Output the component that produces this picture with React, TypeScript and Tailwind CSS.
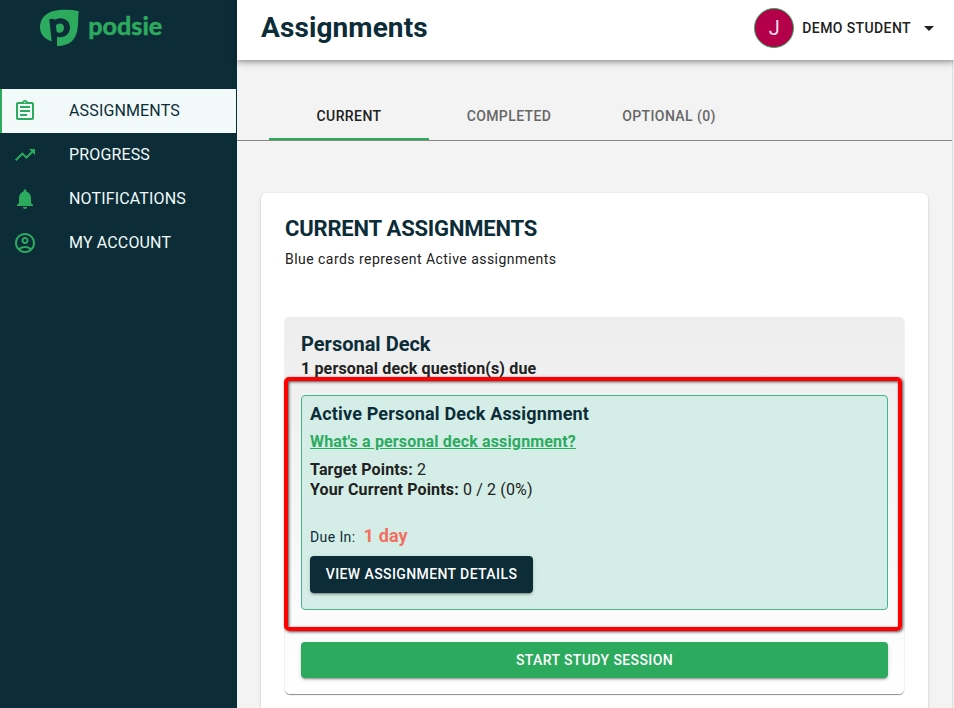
import type { ReactNode } from "react";

function Icon({ children, size = 24 }: { children: ReactNode; size?: number }) {
  return (
    <svg width={size} height={size} viewBox="0 0 24 24" fill="currentColor" className="shrink-0">
      {children}
    </svg>
  );
}

const navItems = [
  {
    label: "ASSIGNMENTS",
    active: true,
    icon: (
      <path d="M7 15h7v2H7zm0-4h10v2H7zm0-4h10v2H7zm12-4h-4.180C14.400 1.840 13.300 1 12 1c-1.300 0-2.400.84-2.820 2H5c-.14 0-.27.01-.4.04-.39.08-.74.28-1.010.55-.18.18-.33.4-.43.64-.1.23-.16.49-.16.77v14c0 .27.06.54.16.78s.25.45.43.64c.27.27.62.47 1.010.55.13.02.26.03.4.03h14c1.100 0 2-.9 2-2V5c0-1.100-.9-2-2-2m-7-.25c.41 0 .75.34.75.75s-.34.75-.75.75-.75-.34-.75-.75.34-.75.75-.75M19 19H5V5h14z" />
    ),
  },
  { label: "PROGRESS", icon: <path d="m16 6 2.290 2.290-4.880 4.880-4-4L2 16.590 3.410 18l6-6 4 4 6.300-6.290L22 12V6z" /> },
  {
    label: "NOTIFICATIONS",
    icon: (
      <path d="M12 22c1.100 0 2-.9 2-2h-4c0 1.100.89 2 2 2m6-6v-5c0-3.070-1.640-5.640-4.500-6.320V4c0-.83-.67-1.500-1.500-1.500s-1.500.67-1.500 1.500v.68C7.630 5.360 6 7.920 6 11v5l-2 2v1h16v-1z" />
    ),
  },
  {
    label: "MY ACCOUNT",
    icon: (
      <path d="M12 2C6.480 2 2 6.480 2 12s4.480 10 10 10 10-4.480 10-10S17.520 2 12 2M7.350 18.500C8.660 17.560 10.260 17 12 17s3.340.56 4.650 1.500C15.340 19.440 13.740 20 12 20s-3.340-.56-4.650-1.500m10.790-1.380C16.450 15.800 14.320 15 12 15s-4.450.8-6.140 2.120C4.700 15.730 4 13.950 4 12c0-4.420 3.580-8 8-8s8 3.580 8 8c0 1.950-.7 3.730-1.860 5.120M12 6c-1.930 0-3.500 1.570-3.500 3.500S10.070 13 12 13s3.500-1.570 3.500-3.500S13.930 6 12 6m0 5c-.83 0-1.500-.67-1.500-1.500S11.170 8 12 8s1.500.67 1.500 1.500S12.830 11 12 11" />
    ),
  },
];

function Logo() {
  return (
    <svg width="128" height="48" viewBox="39 4 128 48" className="ml-[39px] mt-1 overflow-visible">
      <path d="M78.700 11.200C70 9 60 9.300 53.500 11C45 13.300 40 19.500 40 27C40 34.500 45 39.500 51.900 41.200L57 46C65 46 71.500 43.500 75 37C79 30 77.800 20 78.700 11.200Z" fill="#2cab5f" />
      <path d="M49.200 19.300C51.500 18.400 53.500 18.600 55 19.700C61.500 15.800 70 19.500 70 27.300C70 35 63.500 38.700 57 36.700V47L51.800 42Z" fill="#0c2d38" />
      <path d="M55.900 25.600C58 22.300 64 22.500 64 27.700C64 32.800 59 33.800 56.700 31.700Z" fill="#2cab5f" />
      <text x="88.300" y="35.300" textLength="74" lengthAdjust="spacingAndGlyphs" fill="#2cab5f" stroke="#2cab5f" strokeWidth="0.5" className="font-['Lato',sans-serif] text-[25px] font-bold">
        podsie
      </text>
    </svg>
  );
}

function Sidebar() {
  return (
    <aside className="w-[237px] shrink-0 bg-[#0c2d38]">
      <div className="h-[89px]">
        <div className="flex"><Logo /></div>
      </div>
      <nav>
        {navItems.map((item) => (
          <div
            key={item.label}
            className={
              item.active
                ? "mr-px flex h-11 items-center border-l-2 border-[#2cab5f] bg-[#f1faf8] pl-[11px] text-[#0c2d38]"
                : "flex h-11 items-center pl-[13px] text-[#f1faf8]"
            }
          >
            <span className="mr-8 w-6 text-[#2cab5f]">
              <Icon>{item.icon}</Icon>
            </span>
            <span className="text-base tracking-[0.15px]">{item.label}</span>
          </div>
        ))}
      </nav>
    </aside>
  );
}

function Header() {
  return (
    <header className="relative z-10 flex h-[60px] shrink-0 items-center justify-between bg-white pl-6 pr-[13px] pb-1 shadow-[0_2px_4px_-1px_rgba(0,0,0,0.2),0_4px_5px_rgba(0,0,0,0.14),0_1px_10px_rgba(0,0,0,0.12)]">
      <h1 className="text-[28px] font-bold tracking-[0.1px] text-[#0c2d38]">Assignments</h1>
      <div className="flex items-center">
        <div className="flex size-10 items-center justify-center rounded-full border border-[#2cab5f] bg-[#b4004b] text-xl text-[#f5dfe8]">J</div>
        <span className="ml-2 text-sm font-medium tracking-[0.4px] text-[#212121]">DEMO STUDENT</span>
        <span className="ml-1.5 text-[#212121]">
          <Icon>
            <path d="m7 10 5 5 5-5z" />
          </Icon>
        </span>
      </div>
    </header>
  );
}

function Tabs() {
  return (
    <div className="flex h-[81px] items-end border-b border-[#878787] pl-8 text-center text-sm font-medium tracking-[0.4px] text-[#666]">
      <div className="h-12 w-40 border-b-2 border-[#2cab5f] leading-[48px] text-[#212121]">CURRENT</div>
      <div className="h-12 w-40 leading-[48px]">COMPLETED</div>
      <div className="h-12 w-40 leading-[48px]">OPTIONAL (0)</div>
    </div>
  );
}

const raised = "shadow-[0_3px_1px_-2px_rgba(0,0,0,0.2),0_2px_2px_rgba(0,0,0,0.14),0_1px_5px_rgba(0,0,0,0.12)]";

function ActiveAssignment() {
  return (
    <section className="mt-4 h-[215px] rounded border border-[#45b391] bg-[#d4eee7] px-2 pt-1.5">
      <h3 className="text-lg leading-6 font-bold tracking-[0.17px] text-[#0c2d38]">Active Personal Deck Assignment</h3>
      <a className="mt-1 block text-base leading-6 font-bold tracking-[0.15px] text-[#2cab5f] underline">What's a personal deck assignment?</a>
      <p className="mt-1.5 text-base leading-5 tracking-[0.15px]"><b>Target Points:</b> 2</p>
      <p className="text-base leading-5 tracking-[0.15px]"><b>Your Current Points:</b> 0 / 2 (0%)</p>
      <p className="mt-6 flex h-6 items-baseline gap-2 text-[#0c2d38]">
        <span className="text-sm tracking-[0.4px]">Due In:</span>
        <span className="text-lg leading-6 font-bold tracking-[0.15px] text-[#f27062]">1 day</span>
      </p>
      <button className={`mt-2 block h-[37px] w-[223px] rounded bg-[#0c2d38] pb-px text-sm font-medium tracking-[0.4px] text-white ${raised}`}>
        VIEW ASSIGNMENT DETAILS
      </button>
    </section>
  );
}

export default function App() {
  return (
    <div className="flex h-[708px] w-[954px] overflow-hidden bg-[#f3f3f3] font-['Roboto',sans-serif] text-[#212121]">
      <Sidebar />
      <div className="flex min-w-0 flex-1 flex-col">
        <Header />
        <main className="mr-px flex-1 border-r border-[#dedede]">
          <Tabs />
          <div className="ml-6 mr-6 mt-[52px] h-[560px] rounded-md bg-white px-6 pt-5 shadow-[0_1px_3px_rgba(0,0,0,0.2)]">
            <h2 className="text-[22px] leading-8 font-bold tracking-[-0.2px] text-[#0c2d38]">CURRENT ASSIGNMENTS</h2>
            <p className="mt-1 text-sm leading-5 tracking-[0.46px]">Blue cards represent Active assignments</p>
            <div className="relative mt-12 h-[377px] rounded-[5px] bg-linear-to-b from-[#ededed] to-white px-4 pt-[14px] shadow-[0_1px_1px_rgba(0,0,0,0.45),0_0_1px_rgba(0,0,0,0.15)]">
              <h3 className="text-xl leading-[26px] font-bold text-[#0c2d38]">Personal Deck</h3>
              <p className="mt-[1px] text-base leading-[21px] font-bold tracking-[0.15px]">1 personal deck question(s) due</p>
              <ActiveAssignment />
              <button className={`mt-8 block h-9 w-full rounded bg-[#2cab5f] text-sm font-medium tracking-[0.4px] text-white ${raised}`}>
                START STUDY SESSION
              </button>
              <div className="pointer-events-none absolute left-[-1px] top-[60px] h-[254px] w-[618px] rounded-[5px] border-4 border-[#ff0000] shadow-[1px_1px_3px_rgba(0,0,0,0.7),inset_1px_1px_3px_rgba(0,0,0,0.7)]" />
            </div>
          </div>
        </main>
      </div>
    </div>
  );
}
